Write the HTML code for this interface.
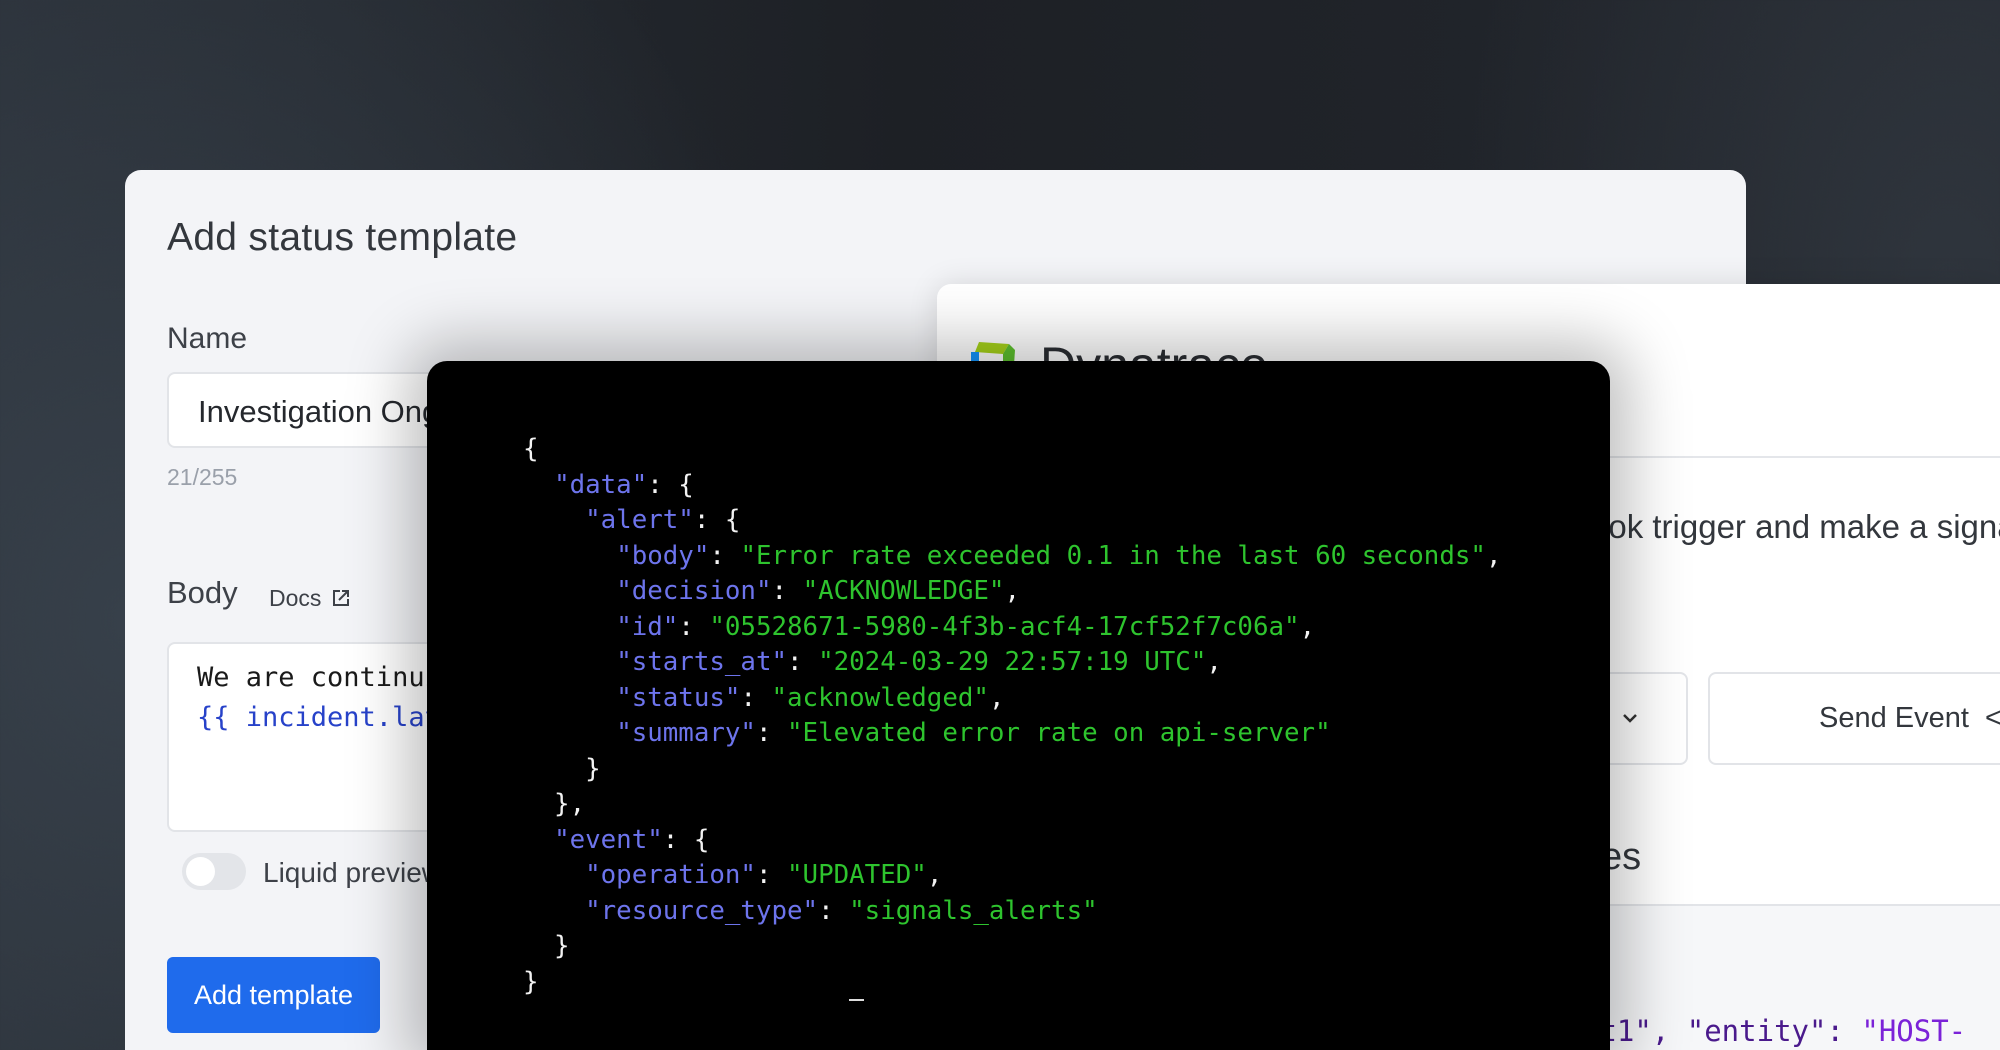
<!DOCTYPE html>
<html style="overflow:hidden;height:1050px"><head><meta charset="utf-8"><style>
*{margin:0;padding:0;box-sizing:border-box}
body{width:2000px;height:1050px;overflow:hidden;position:relative;font-family:"Liberation Sans",sans-serif;
background:radial-gradient(ellipse 700px 900px at 130px 620px,#37404a 0%,rgba(55,64,74,0) 100%),radial-gradient(ellipse 500px 900px at 1950px 300px,#2f353d 0%,rgba(47,53,61,0) 100%),linear-gradient(90deg,#2a3038 0%,#1d2025 45%,#23272e 100%);}
.abs{position:absolute}
.card{left:125px;top:170px;width:1621px;height:880px;background:#f3f4f7;border-radius:16px 16px 0 0}
.t{color:#2b2e33}
.right{left:937px;top:284px;width:1063px;height:766px;background:#fff;border-radius:14px 0 0 0;box-shadow:0 0 30px rgba(0,0,0,.12)}
.term{left:427px;top:361px;width:1183px;height:689px;background:#000;border-radius:20px 20px 0 0;box-shadow:0 0 60px 20px rgba(0,0,0,.25)}
pre{font-family:"DejaVu Sans Mono","Liberation Mono",monospace;font-size:25.8px;line-height:35.5px;color:#f2f2f2}
.k{color:#6d74ec}.s{color:#2ec42e}
</style></head><body>
<div class="abs card"></div>
<div class="abs t" style="left:167px;top:216px;font-size:39px;color:#33373d;letter-spacing:0.3px">Add status template</div>
<div class="abs t" style="left:167px;top:322px;font-size:30px;color:#3d4148">Name</div>
<div class="abs" style="left:167px;top:372px;width:500px;height:76px;background:#fff;border:2px solid #e2e4e8;border-radius:8px"></div>
<div class="abs t" style="left:198px;top:394px;font-size:31px;color:#25282d">Investigation Ongoing</div>
<div class="abs" style="left:167px;top:464px;font-size:23px;color:#9aa0aa">21/255</div>
<div class="abs t" style="left:167px;top:575px;font-size:31px;color:#3d4148">Body</div>
<div class="abs t" style="left:269px;top:585px;font-size:23px;color:#3d4148">Docs</div>
<svg class="abs" style="left:331px;top:588px" width="20" height="20" viewBox="0 0 20 20" fill="none" stroke="#3d4148" stroke-width="2"><path d="M9 3H3v14h14v-6"/><path d="M11 3h6v6M17 3L8 12"/></svg>
<div class="abs" style="left:167px;top:642px;width:500px;height:190px;background:#fff;border:2px solid #e2e4e8;border-radius:8px"></div>
<pre class="abs" style="left:197px;top:658px;font-size:27px;line-height:40px;color:#1a1a1a">We are continuing
<span style="color:#2742c9">{{ incident.latest }}</span></pre>
<div class="abs" style="left:182px;top:853px;width:64px;height:37px;border-radius:19px;background:#e3e5e9"></div>
<div class="abs" style="left:186px;top:857px;width:29px;height:29px;border-radius:50%;background:#fff"></div>
<div class="abs t" style="left:263px;top:857px;font-size:28px;color:#3d4148">Liquid preview</div>
<div class="abs" style="left:167px;top:957px;width:213px;height:76px;border-radius:6px;background:#1f6bec;color:#fff;font-size:27px;line-height:76px;text-align:center">Add template</div>

<div class="abs right"></div>
<svg class="abs" style="left:969px;top:340px" width="50" height="40" viewBox="0 0 50 40"><path d="M10 2 L40 4 L34 14 L6 12Z" fill="#a6d21a"/><path d="M40 4 L46 10 L44 40 L34 40 L34 14Z" fill="#5ec22e"/><path d="M2 12 L10 12 L10 40 L2 40Z" fill="#1496ff"/></svg>
<div class="abs" style="left:1040px;top:336px;font-size:50px;color:#2b2e33">Dynatrace</div>
<div class="abs" style="left:1600px;top:456px;width:400px;height:2px;background:#e4e6ea"></div>
<div class="abs t" style="left:1590px;top:508px;font-size:33px;color:#33373d;white-space:nowrap">ook trigger and make a signal</div>
<div class="abs" style="left:1500px;top:672px;width:188px;height:93px;border:2px solid #e2e4e8;border-radius:8px;background:#fff"></div>
<svg class="abs" style="left:1621px;top:711px" width="18" height="14" viewBox="0 0 18 14" fill="none" stroke="#333" stroke-width="2.5"><path d="M3 4l6 6 6-6"/></svg>
<div class="abs" style="left:1708px;top:672px;width:400px;height:93px;border:2px solid #e2e4e8;border-radius:8px;background:#fff"></div>
<div class="abs t" style="left:1819px;top:702px;font-size:29px;color:#33373d;white-space:nowrap">Send Event &nbsp;&lt;</div>
<div class="abs t" style="left:1582px;top:836px;font-size:38px;color:#33373d">ves</div>
<div class="abs" style="left:1600px;top:904px;width:400px;height:146px;background:#f6f7f9;border-top:2px solid #e2e4e8"></div>
<pre class="abs" style="left:1582px;top:1014px;font-size:29px;color:#4a1a8c;white-space:nowrap">et1", <span>"entity"</span>: <span style="color:#7b22d8">"HOST-</span></pre>

<div class="abs term"></div>
<pre class="abs" style="left:523px;top:432px">{
  <span class="k">"data"</span>: {
    <span class="k">"alert"</span>: {
      <span class="k">"body"</span>: <span class="s">"Error rate exceeded 0.1 in the last 60 seconds"</span>,
      <span class="k">"decision"</span>: <span class="s">"ACKNOWLEDGE"</span>,
      <span class="k">"id"</span>: <span class="s">"05528671-5980-4f3b-acf4-17cf52f7c06a"</span>,
      <span class="k">"starts_at"</span>: <span class="s">"2024-03-29 22:57:19 UTC"</span>,
      <span class="k">"status"</span>: <span class="s">"acknowledged"</span>,
      <span class="k">"summary"</span>: <span class="s">"Elevated error rate on api-server"</span>
    }
  },
  <span class="k">"event"</span>: {
    <span class="k">"operation"</span>: <span class="s">"UPDATED"</span>,
    <span class="k">"resource_type"</span>: <span class="s">"signals_alerts"</span>
  }
}</pre>
<div class="abs" style="left:849px;top:999px;width:15px;height:2px;background:#ddd"></div>
</body></html>
